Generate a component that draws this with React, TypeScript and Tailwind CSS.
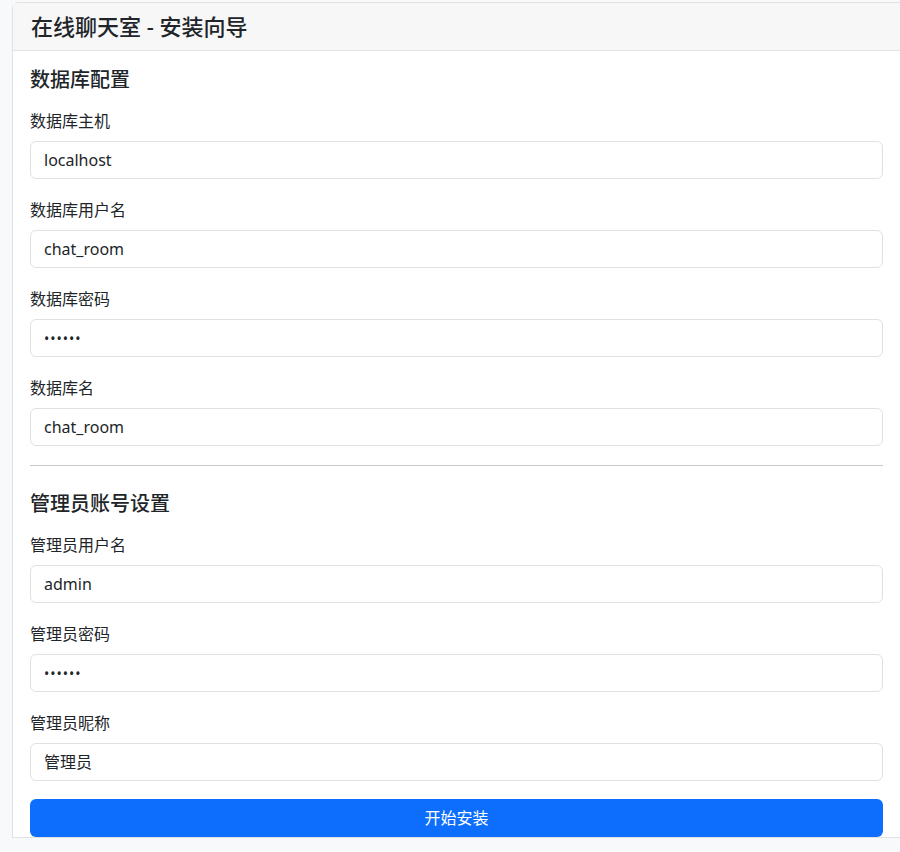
export default function App() {
  const font = { fontFamily: '"Noto Sans", "Noto Sans CJK SC", sans-serif' };
  const Field = ({ label, value, pw }: { label: string; value: string; pw?: boolean }) => (
    <div className="mb-[19px]">
      <div className="text-[16px] leading-[24px] mb-[8px] text-[#212529]">{label}</div>
      <div className="h-[38px] border border-[#dee2e6] rounded-[6px] bg-white px-[13px] flex items-center text-[16px] text-[#212529]">
        {pw ? <span className="tracking-[1px] text-[14px]">••••••</span> : value}
      </div>
    </div>
  );
  return (
    <div className="w-[900px] h-[852px] overflow-hidden bg-[#f8f9fa] pl-[12px] pt-[2px]" style={font}>
      <div className="w-[900px] bg-white border border-[#dfe1e3] rounded-tl-[6px]">
        <div className="h-[48px] bg-[#f7f7f7] border-b border-[#e3e3e3] px-[18px] flex items-center text-[22px] font-medium text-[#212529]">
          在线聊天室 - 安装向导
        </div>
        <div className="pl-[17px] pr-[8px] pt-[17px] w-[878px]">
          <div className="text-[20px] leading-[24px] font-medium mb-[17px] text-[#212529]">数据库配置</div>
          <Field label="数据库主机" value="localhost" />
          <Field label="数据库用户名" value="chat_room" />
          <Field label="数据库密码" value="" pw />
          <Field label="数据库名" value="chat_room" />
          <div className="border-t border-[#c8c9ca] mt-[7px] mb-[26px]" />
          <div className="text-[20px] leading-[24px] font-medium mb-[17px] text-[#212529]">管理员账号设置</div>
          <Field label="管理员用户名" value="admin" />
          <Field label="管理员密码" value="" pw />
          <Field label="管理员昵称" value="管理员" />
          <button className="w-full h-[38px] rounded-[6px] bg-[#0d6efd] text-white text-[16px] -mt-[1px]">开始安装</button>
        </div>
      </div>
    </div>
  );
}
